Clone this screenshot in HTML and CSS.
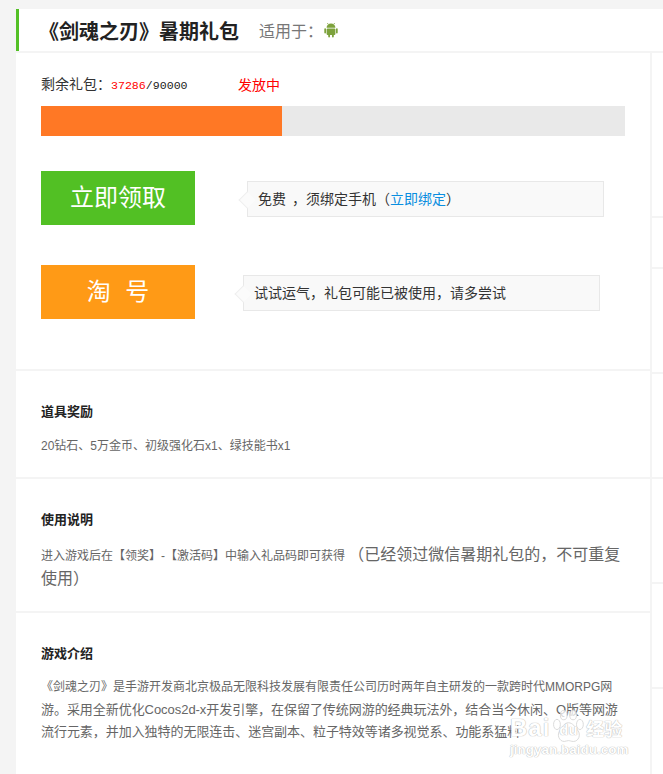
FILE: index.html
```html
<!DOCTYPE html>
<html lang="zh-CN">
<head>
    <meta charset="UTF-8">
    <meta name="viewport" content="width=device-width, initial-scale=1.0">
    <title>《剑魂之刃》暑期礼包</title>
    <link rel="stylesheet" href="styles.css">
</head>
<body>
    <div class="page">
        <header class="gift-header">
            <h1>《剑魂之刃》暑期礼包</h1>
            <span class="platform">适用于：</span>
            <svg class="android" viewBox="0 0 16 16" aria-hidden="true">
                <path d="M3.6 5.8a4.4 4.2 0 0 1 8.8 0z"/>
                <path d="M5.2 2.4 4.4 1M10.8 2.4l.8-1.4" class="android-line"/>
                <rect x="3.6" y="6.4" width="8.8" height="6.6" rx="1"/>
                <rect x="1.3" y="6.2" width="1.7" height="5.2" rx=".85"/>
                <rect x="13" y="6.2" width="1.7" height="5.2" rx=".85"/>
                <rect x="5.2" y="12" width="1.8" height="3.4" rx=".9"/>
                <rect x="9" y="12" width="1.8" height="3.4" rx=".9"/>
            </svg>
        </header>

        <div class="columns">
            <main class="main">
                <section class="section claim">
                    <div class="remain">
                        <span class="remain-label">剩余礼包：<span class="count"><em>37286</em>/90000</span></span>
                        <span class="status">发放中</span>
                    </div>
                    <div class="progress"><div class="progress-bar" style="width: 41.2%"></div></div>

                    <div class="action">
                        <a class="btn btn-green">立即领取</a>
                        <div class="tip tip-first">免费 ，须绑定手机（<a class="link">立即绑定</a>）</div>
                    </div>
                    <div class="action action-second">
                        <a class="btn btn-orange">淘 号</a>
                        <div class="tip">试试运气，礼包可能已被使用，请多尝试</div>
                    </div>
                </section>

                <section class="section reward">
                    <h2>道具奖励</h2>
                    <p>20钻石、5万金币、初级强化石x1、绿技能书x1</p>
                </section>

                <section class="section usage">
                    <h2>使用说明</h2>
                    <p>进入游戏后在【领奖】-【激活码】中输入礼品码即可获得 <span class="big">（已经领过微信暑期礼包的，不可重复使用）</span></p>
                </section>

                <section class="section intro">
                    <h2>游戏介绍</h2>
                    <p><span class="lead">《剑魂之刃》是手游开发商北京极品无限科技发展有限责任公司历时两年自主研发的一款跨时代MMORPG网</span>游。采用全新优化Cocos2d-x开发引擎，在保留了传统网游的经典玩法外，结合当今休闲、Q版等网游流行元素，并加入独特的无限连击、迷宫副本、粒子特效等诸多视觉系、功能系猛料</p>
                </section>
            </main>

            <aside class="rail">
                <div class="rail-item rail-top"></div>
                <div class="rail-item rail-short"></div>
                <div class="rail-item"></div>
                <div class="rail-item"></div>
                <div class="rail-item"></div>
                <div class="rail-item"></div>
            </aside>
        </div>

        <div class="watermark">
            <div class="wm-logo">
                <span class="wm-bai">Bai</span>
                <span class="wm-du">
                    <svg class="wm-paw" viewBox="0 0 40 40" aria-hidden="true">
                        <ellipse cx="7" cy="17" rx="4" ry="6"/>
                        <ellipse cx="15" cy="6" rx="4" ry="5.5"/>
                        <ellipse cx="26" cy="6" rx="4" ry="5.5"/>
                        <ellipse cx="34" cy="17" rx="4" ry="6"/>
                        <path d="M20.500 15c-5 0-7 5-10 9-4 5-1 13 5 13 2 0 3-1 5-1s3 1 6 1c6 0 9-8 5-13-3-4-6-9-11-9z"/>
                    </svg>
                    <span class="wm-du-text">du</span>
                </span>
                <span class="wm-cn">经验</span>
            </div>
            <div class="wm-url">jingyan.baidu.com</div>
        </div>
    </div>
</body>
</html>
```

FILE: styles.css
```css
* {
    margin: 0;
    padding: 0;
    box-sizing: border-box;
}
html, body {
    height: 774px;
    overflow: hidden;
}
body {
    font-family: "Liberation Sans", "Noto Sans CJK SC", sans-serif;
    background-color: #f4f4f4;
    color: #333;
}
.page {
    position: relative;
    height: 774px;
    margin-left: 16px;
    padding-top: 9px;
    overflow: hidden;
}
.gift-header {
    display: flex;
    align-items: center;
    height: 42px;
    padding-left: 20px;
    background-color: #fff;
    border-left: 3px solid #53c026;
}
.gift-header h1 {
    font-size: 20px;
    font-weight: 700;
    color: #222;
    white-space: nowrap;
}
.platform {
    margin-left: 20px;
    font-size: 16px;
    color: #777;
}
.android {
    width: 16px;
    height: 16px;
    fill: #7da23c;
}
.android-line {
    fill: none;
    stroke: #7da23c;
    stroke-width: .8;
}
.columns {
    display: flex;
    margin-top: 2px;
}
.main {
    width: 634px;
    flex: none;
}
.section {
    background-color: #fff;
    padding: 0 25px;
    margin-bottom: 2px;
}
.claim {
    height: 316px;
    padding-top: 20px;
}
.remain {
    display: flex;
    align-items: center;
    height: 20px;
    font-size: 14px;
    color: #333;
}
.remain-label {
    width: 197px;
}
.count {
    font-family: "Liberation Mono", monospace;
    font-size: 11.6px;
    color: #222;
}
.count em {
    font-style: normal;
    color: #f00;
}
.status {
    margin-top: 2px;
    font-size: 14px;
    color: #f00;
}
.progress {
    height: 30px;
    margin-top: 13px;
    background-color: #e9e9e9;
}
.progress-bar {
    height: 100%;
    background-color: #ff7825;
}
.action {
    display: flex;
    align-items: center;
    height: 54px;
    margin-top: 35px;
}
.action-second {
    margin-top: 40px;
}
.btn {
    display: block;
    width: 154px;
    height: 54px;
    line-height: 54px;
    text-align: center;
    font-size: 24px;
    color: #fff;
}
.btn-green {
    background-color: #52c024;
}
.btn-orange {
    background-color: #ff9a16;
    white-space: pre;
    word-spacing: 8px;
}
.tip {
    position: relative;
    display: flex;
    align-items: center;
    width: 357px;
    height: 36px;
    margin-top: 2px;
    margin-left: 48px;
    padding-left: 10px;
    padding-bottom: 2px;
    font-size: 14px;
    color: #333;
    background-color: #f9f9f9;
    border: 1px solid #e8e8e8;
    white-space: pre;
}
.tip-first {
    margin-left: 52px;
    word-spacing: 2px;
}
.tip::before {
    content: "";
    position: absolute;
    left: -7px;
    top: 12px;
    width: 11px;
    height: 11px;
    background-color: #fbfbfb;
    border-left: 1px solid #eee;
    border-bottom: 1px solid #eee;
    transform: rotate(45deg);
}
.link {
    color: #0a8ee0;
}
.section h2 {
    font-size: 13px;
    font-weight: 700;
    line-height: 20px;
    color: #222;
}
.section p {
    font-size: 12px;
    color: #666;
}
.reward {
    height: 106px;
    padding-top: 31px;
}
.reward p {
    margin-top: 14px;
    line-height: 20px;
}
.usage {
    height: 132px;
    padding-top: 31px;
}
.usage p {
    margin-top: 14px;
    line-height: 24px;
}
.big {
    font-size: 16px;
    line-height: 1;
}
.intro {
    height: 170px;
    padding-top: 31px;
}
.section.intro p {
    margin-top: 12px;
    font-size: 13px;
    line-height: 22.5px;
    letter-spacing: -.05px;
    padding-right: 4px;
}
.lead {
    font-size: 12px;
    line-height: 1;
    letter-spacing: 0;
}
.rail {
    flex: 1;
    background-color: #fff;
    border-left: 2px solid #f4f4f4;
}
.rail-item {
    height: 105px;
    border-bottom: 2px solid #f4f4f4;
}
.rail-top {
    height: 165px;
}
.rail-short {
    height: 51px;
}
.watermark {
    position: absolute;
    right: 37px;
    top: 714px;
    width: 116px;
    color: #fff;
    text-shadow: 0 0 1px #b8b8b8, 0 0 1px #b8b8b8;
}
.wm-logo {
    display: flex;
    align-items: center;
    height: 28px;
    font-weight: 700;
    white-space: nowrap;
}
.wm-bai {
    font-size: 24px;
    letter-spacing: 1px;
}
.wm-du {
    position: relative;
    width: 34px;
    height: 28px;
    margin-left: 1px;
}
.wm-paw {
    position: absolute;
    left: 0;
    top: -4px;
    width: 34px;
    height: 34px;
    fill: #fff;
    fill-opacity: .75;
    stroke: #d4d4d4;
    stroke-width: 1;
}
.wm-du-text {
    position: absolute;
    left: 8px;
    top: 6px;
    font-size: 15px;
    line-height: 20px;
}
.wm-cn {
    margin-left: 1px;
    font-size: 18px;
}
.wm-url {
    margin-top: 0;
    font-size: 13.5px;
    font-weight: 700;
    white-space: nowrap;
}
```
